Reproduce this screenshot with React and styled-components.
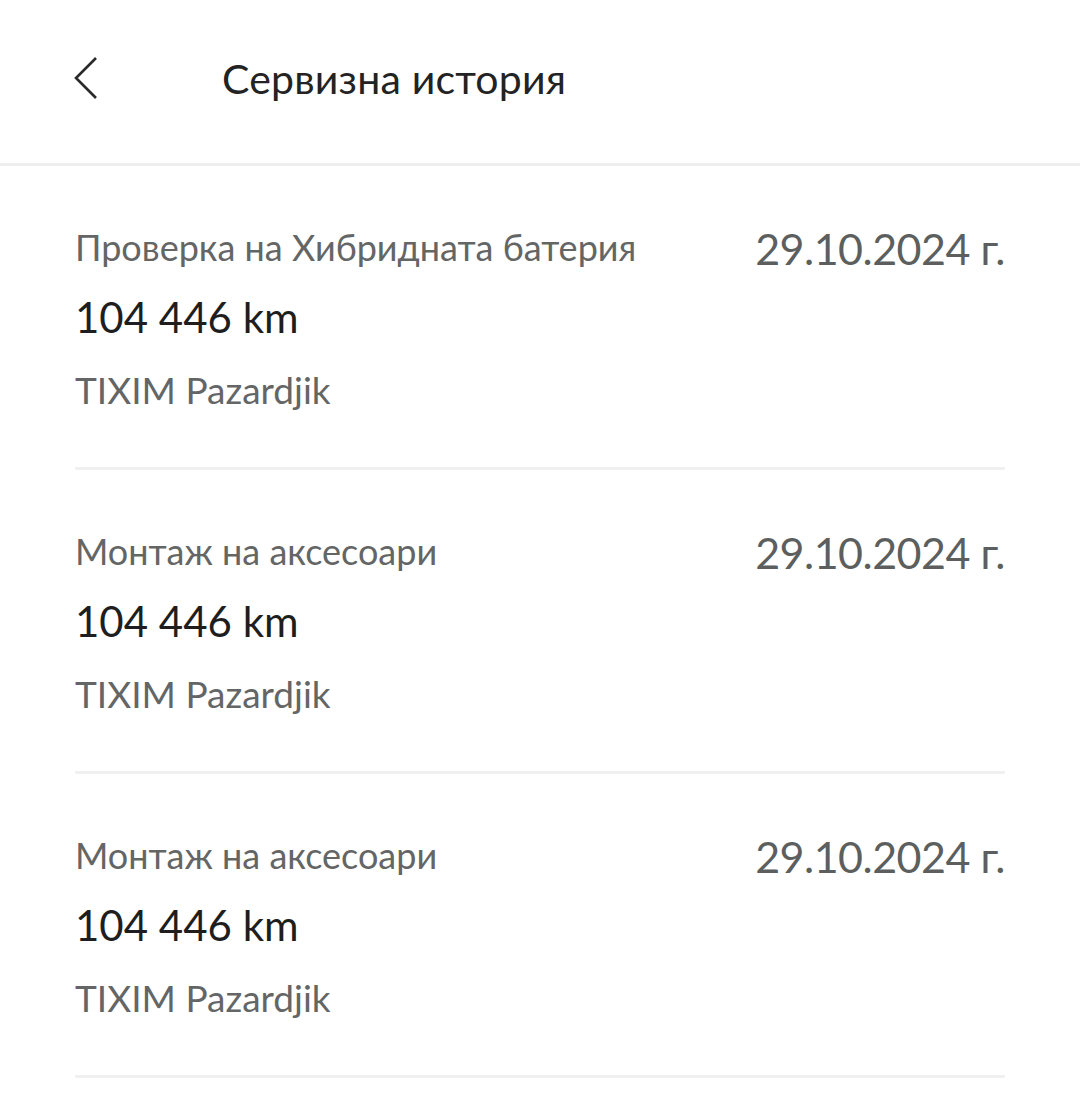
import React from 'react';
import styled, { createGlobalStyle } from 'styled-components';

const GlobalStyle = createGlobalStyle`
  html, body {
    margin: 0;
    padding: 0;
    background: #ffffff;
  }
  body {
    font-family: Lato, "Noto Sans", sans-serif;
  }
`;

const Page = styled.div`
  width: 1080px;
  min-height: 1093px;
  background: #ffffff;
`;

const Header = styled.header`
  display: flex;
  align-items: center;
  height: 166px;
  border-bottom: 3px solid #eeeeee;
  box-sizing: border-box;
  padding-left: 73px;
`;

const BackButton = styled.button`
  display: flex;
  align-items: center;
  justify-content: center;
  border: none;
  background: none;
  padding: 0;
  margin-top: -8px;
  width: 26px;
  height: 44px;
  cursor: pointer;
`;

const Title = styled.h1`
  margin: -6px 0 0 123px;
  font-size: 41px;
  font-weight: 400;
  color: #232323;
  letter-spacing: 0.2px;
`;

const List = styled.div`
  padding: 0 75px;
`;

const Item = styled.div`
  display: flex;
  justify-content: space-between;
  align-items: flex-start;
  height: 304px;
  box-sizing: border-box;
  padding-top: 59px;
  border-bottom: 3px solid #f0f0f0;
`;

const Info = styled.div`
  display: flex;
  flex-direction: column;
`;

const ServiceName = styled.div`
  font-size: 36px;
  line-height: 44px;
  color: #646666;
`;

const Mileage = styled.div`
  margin-top: 26px;
  font-size: 42px;
  line-height: 44px;
  color: #1e1e1e;
`;

const Dealer = styled.div`
  margin-top: 29px;
  font-size: 37px;
  line-height: 44px;
  color: #646666;
`;

const DateText = styled.div`
  font-size: 43px;
  line-height: 48px;
  margin-top: 0;
  color: #5d5f5f;
  letter-spacing: -0.5px;
`;

const items = [
  { id: 1, name: 'Проверка на Хибридната батерия', km: '104 446 km', dealer: 'TIXIM Pazardjik', date: '29.10.2024 г.' },
  { id: 2, name: 'Монтаж на аксесоари', km: '104 446 km', dealer: 'TIXIM Pazardjik', date: '29.10.2024 г.' },
  { id: 3, name: 'Монтаж на аксесоари', km: '104 446 km', dealer: 'TIXIM Pazardjik', date: '29.10.2024 г.' },
];

function App() {
  return (
    <Page>
      <GlobalStyle />
      <Header>
        <BackButton aria-label="Назад">
          <svg width="26" height="44" viewBox="0 0 26 44" fill="none">
            <path d="M23 2 L3 22 L23 42" stroke="#2a2a2a" strokeWidth="2.6" />
          </svg>
        </BackButton>
        <Title>Сервизна история</Title>
      </Header>
      <List>
        {items.map((item) => (
          <Item key={item.id}>
            <Info>
              <ServiceName>{item.name}</ServiceName>
              <Mileage>{item.km}</Mileage>
              <Dealer>{item.dealer}</Dealer>
            </Info>
            <DateText>{item.date}</DateText>
          </Item>
        ))}
      </List>
    </Page>
  );
}

export default App;
